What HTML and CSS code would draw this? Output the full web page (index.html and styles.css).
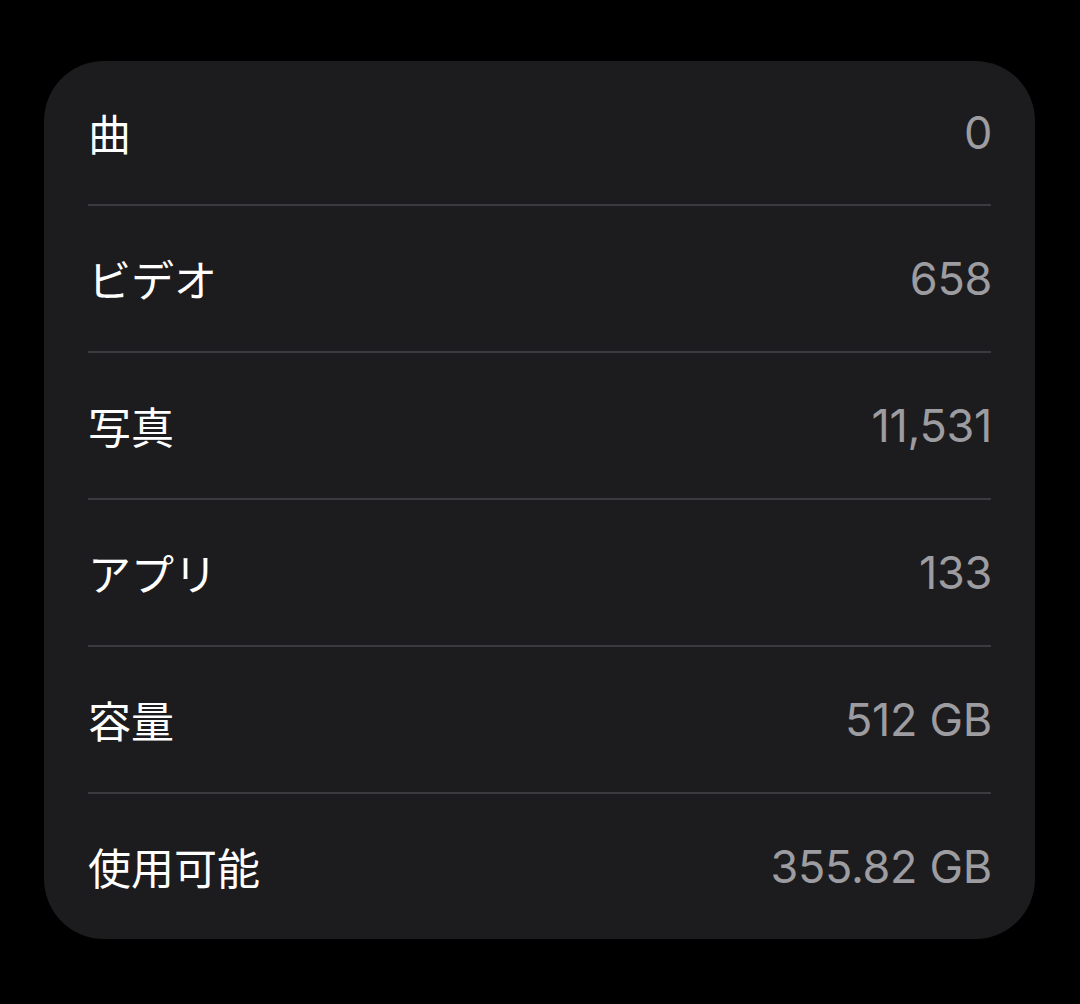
FILE: index.html
```html
<!DOCTYPE html>
<html lang="ja">
<head>
<meta charset="utf-8">
<link rel="stylesheet" href="styles.css">
</head>
<body>
<div class="card">
  <div class="row first"><span class="label">曲</span><span class="value">0</span></div>
  <div class="row"><span class="label">ビデオ</span><span class="value">658</span></div>
  <div class="row"><span class="label">写真</span><span class="value">11,531</span></div>
  <div class="row"><span class="label">アプリ</span><span class="value">133</span></div>
  <div class="row"><span class="label">容量</span><span class="value">512 GB</span></div>
  <div class="row"><span class="label">使用可能</span><span class="value">355.82 GB</span></div>
</div>
</body>
</html>
```

FILE: styles.css
```css
html, body {
  margin: 0;
  padding: 0;
  background: #000;
}
body {
  width: 1080px;
  height: 1004px;
  padding: 61px 45px 0 44px;
  box-sizing: border-box;
}
.card {
  background: #1c1c1e;
  border-radius: 60px;
  height: 878px;
  padding: 0 44px;
  display: flex;
  flex-direction: column;
}
.row {
  height: 147px;
  box-sizing: border-box;
  border-top: 2px solid #3b3b3f;
  display: flex;
  align-items: center;
  justify-content: space-between;
}
.row.first {
  height: 143px;
  border-top: none;
}
.label {
  color: #ffffff;
  font-family: "Noto Sans CJK JP", sans-serif;
  font-size: 43px;
  line-height: 1;
}
.value {
  color: #9c9ca1;
  font-family: Inter, "Noto Sans", sans-serif;
  font-size: 45px;
  letter-spacing: -0.3px;
  line-height: 1;
  margin-right: -1px;
}
```
